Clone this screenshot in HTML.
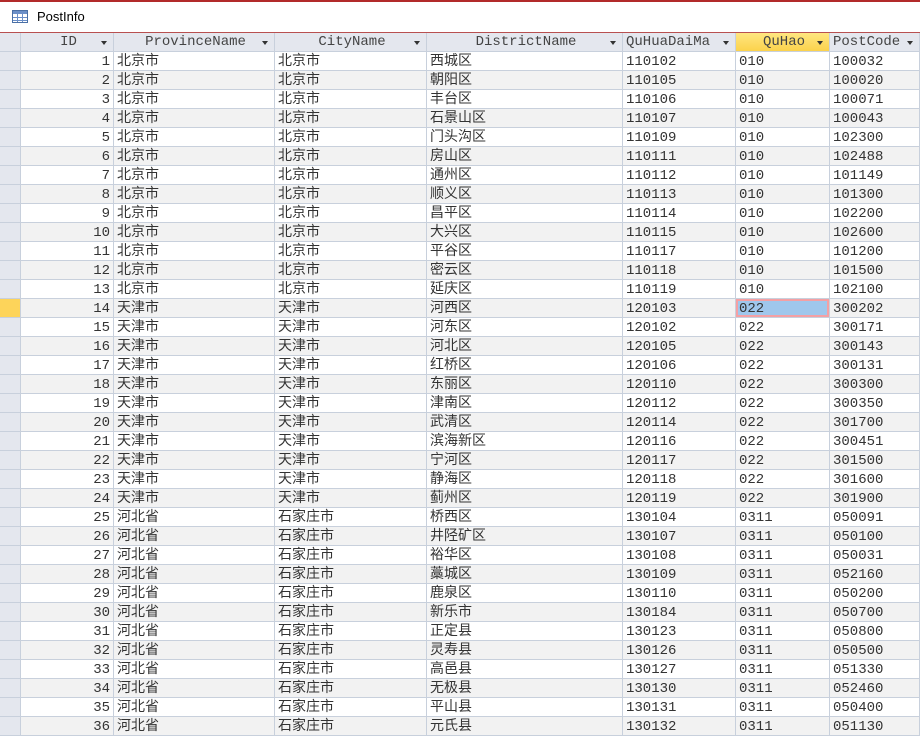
<!DOCTYPE html>
<html><head><meta charset="utf-8"><style>
body{margin:0;width:920px;height:736px;overflow:hidden;background:#fff;font-family:"Liberation Mono","Noto Sans CJK SC",monospace;}
.top{position:absolute;left:0;top:0;width:920px;height:2px;background:#b22a2a;}
.title{position:absolute;left:0;top:2px;width:920px;height:30px;border-bottom:1px solid #b85050;font-family:"Liberation Sans",sans-serif;font-size:13px;}
.title span{position:absolute;left:37px;top:7px;}
table{position:absolute;left:0;top:33px;display:block;width:920px;}
tbody{display:block}
tr{display:grid;grid-template-columns:21px 93px 161px 152px 196px 113px 94px 90px;height:19px;}
td,th{display:block;box-sizing:border-box;height:19px;padding:1px 0 0 3px;border-right:1px solid #c8d0dc;border-bottom:1px solid #c8d0dc;font-size:14px;line-height:18px;white-space:nowrap;overflow:hidden;color:#333;}
th{background:#e4e7ee;font-weight:normal;text-align:center;position:relative;color:#444;padding-top:0}
th:after{content:"";position:absolute;right:6px;top:8px;border:3px solid transparent;border-top:4px solid #333;}
th.s:after{display:none}
th.y{background:linear-gradient(#ffe680,#fbd24c);}
td.sel{background:#e4e7ee;padding:0}
tr:nth-child(odd) td{background:#f2f2f2}
tr:nth-child(odd) td.sel{background:#e4e7ee}
td.n{text-align:right;padding:1px 3px 0 0}
td.cur{background:#9fc7ec !important;box-shadow:inset 0 0 0 2px #f4a0a4;}
td.ys{background:#fdd45a !important}
</style></head><body>
<div class="top"></div>
<div class="title"><svg style="position:absolute;left:12px;top:8px" width="16" height="13"><rect x="0.5" y="0.5" width="15" height="12" fill="#fff" stroke="#4a6fa5"/><rect x="1" y="1" width="14" height="3" fill="#6b8fc8"/><path d="M1 7.5H15M1 10.5H15M5.5 4V12M10.5 4V12" stroke="#6b8fc8"/></svg><span>PostInfo</span></div>
<table><tbody>
<tr><th class="s"></th><th>ID</th><th>ProvinceName</th><th>CityName</th><th>DistrictName</th><th style="text-align:left">QuHuaDaiMa</th><th class="y">QuHao</th><th style="text-align:left">PostCode</th></tr>
<tr><td class="sel"></td><td class="n">1</td><td>北京市</td><td>北京市</td><td>西城区</td><td>110102</td><td>010</td><td>100032</td></tr>
<tr><td class="sel"></td><td class="n">2</td><td>北京市</td><td>北京市</td><td>朝阳区</td><td>110105</td><td>010</td><td>100020</td></tr>
<tr><td class="sel"></td><td class="n">3</td><td>北京市</td><td>北京市</td><td>丰台区</td><td>110106</td><td>010</td><td>100071</td></tr>
<tr><td class="sel"></td><td class="n">4</td><td>北京市</td><td>北京市</td><td>石景山区</td><td>110107</td><td>010</td><td>100043</td></tr>
<tr><td class="sel"></td><td class="n">5</td><td>北京市</td><td>北京市</td><td>门头沟区</td><td>110109</td><td>010</td><td>102300</td></tr>
<tr><td class="sel"></td><td class="n">6</td><td>北京市</td><td>北京市</td><td>房山区</td><td>110111</td><td>010</td><td>102488</td></tr>
<tr><td class="sel"></td><td class="n">7</td><td>北京市</td><td>北京市</td><td>通州区</td><td>110112</td><td>010</td><td>101149</td></tr>
<tr><td class="sel"></td><td class="n">8</td><td>北京市</td><td>北京市</td><td>顺义区</td><td>110113</td><td>010</td><td>101300</td></tr>
<tr><td class="sel"></td><td class="n">9</td><td>北京市</td><td>北京市</td><td>昌平区</td><td>110114</td><td>010</td><td>102200</td></tr>
<tr><td class="sel"></td><td class="n">10</td><td>北京市</td><td>北京市</td><td>大兴区</td><td>110115</td><td>010</td><td>102600</td></tr>
<tr><td class="sel"></td><td class="n">11</td><td>北京市</td><td>北京市</td><td>平谷区</td><td>110117</td><td>010</td><td>101200</td></tr>
<tr><td class="sel"></td><td class="n">12</td><td>北京市</td><td>北京市</td><td>密云区</td><td>110118</td><td>010</td><td>101500</td></tr>
<tr><td class="sel"></td><td class="n">13</td><td>北京市</td><td>北京市</td><td>延庆区</td><td>110119</td><td>010</td><td>102100</td></tr>
<tr><td class="sel ys"></td><td class="n">14</td><td>天津市</td><td>天津市</td><td>河西区</td><td>120103</td><td class="cur">022</td><td>300202</td></tr>
<tr><td class="sel"></td><td class="n">15</td><td>天津市</td><td>天津市</td><td>河东区</td><td>120102</td><td>022</td><td>300171</td></tr>
<tr><td class="sel"></td><td class="n">16</td><td>天津市</td><td>天津市</td><td>河北区</td><td>120105</td><td>022</td><td>300143</td></tr>
<tr><td class="sel"></td><td class="n">17</td><td>天津市</td><td>天津市</td><td>红桥区</td><td>120106</td><td>022</td><td>300131</td></tr>
<tr><td class="sel"></td><td class="n">18</td><td>天津市</td><td>天津市</td><td>东丽区</td><td>120110</td><td>022</td><td>300300</td></tr>
<tr><td class="sel"></td><td class="n">19</td><td>天津市</td><td>天津市</td><td>津南区</td><td>120112</td><td>022</td><td>300350</td></tr>
<tr><td class="sel"></td><td class="n">20</td><td>天津市</td><td>天津市</td><td>武清区</td><td>120114</td><td>022</td><td>301700</td></tr>
<tr><td class="sel"></td><td class="n">21</td><td>天津市</td><td>天津市</td><td>滨海新区</td><td>120116</td><td>022</td><td>300451</td></tr>
<tr><td class="sel"></td><td class="n">22</td><td>天津市</td><td>天津市</td><td>宁河区</td><td>120117</td><td>022</td><td>301500</td></tr>
<tr><td class="sel"></td><td class="n">23</td><td>天津市</td><td>天津市</td><td>静海区</td><td>120118</td><td>022</td><td>301600</td></tr>
<tr><td class="sel"></td><td class="n">24</td><td>天津市</td><td>天津市</td><td>蓟州区</td><td>120119</td><td>022</td><td>301900</td></tr>
<tr><td class="sel"></td><td class="n">25</td><td>河北省</td><td>石家庄市</td><td>桥西区</td><td>130104</td><td>0311</td><td>050091</td></tr>
<tr><td class="sel"></td><td class="n">26</td><td>河北省</td><td>石家庄市</td><td>井陉矿区</td><td>130107</td><td>0311</td><td>050100</td></tr>
<tr><td class="sel"></td><td class="n">27</td><td>河北省</td><td>石家庄市</td><td>裕华区</td><td>130108</td><td>0311</td><td>050031</td></tr>
<tr><td class="sel"></td><td class="n">28</td><td>河北省</td><td>石家庄市</td><td>藁城区</td><td>130109</td><td>0311</td><td>052160</td></tr>
<tr><td class="sel"></td><td class="n">29</td><td>河北省</td><td>石家庄市</td><td>鹿泉区</td><td>130110</td><td>0311</td><td>050200</td></tr>
<tr><td class="sel"></td><td class="n">30</td><td>河北省</td><td>石家庄市</td><td>新乐市</td><td>130184</td><td>0311</td><td>050700</td></tr>
<tr><td class="sel"></td><td class="n">31</td><td>河北省</td><td>石家庄市</td><td>正定县</td><td>130123</td><td>0311</td><td>050800</td></tr>
<tr><td class="sel"></td><td class="n">32</td><td>河北省</td><td>石家庄市</td><td>灵寿县</td><td>130126</td><td>0311</td><td>050500</td></tr>
<tr><td class="sel"></td><td class="n">33</td><td>河北省</td><td>石家庄市</td><td>高邑县</td><td>130127</td><td>0311</td><td>051330</td></tr>
<tr><td class="sel"></td><td class="n">34</td><td>河北省</td><td>石家庄市</td><td>无极县</td><td>130130</td><td>0311</td><td>052460</td></tr>
<tr><td class="sel"></td><td class="n">35</td><td>河北省</td><td>石家庄市</td><td>平山县</td><td>130131</td><td>0311</td><td>050400</td></tr>
<tr><td class="sel"></td><td class="n">36</td><td>河北省</td><td>石家庄市</td><td>元氏县</td><td>130132</td><td>0311</td><td>051130</td></tr>
</tbody></table>
</body></html>
